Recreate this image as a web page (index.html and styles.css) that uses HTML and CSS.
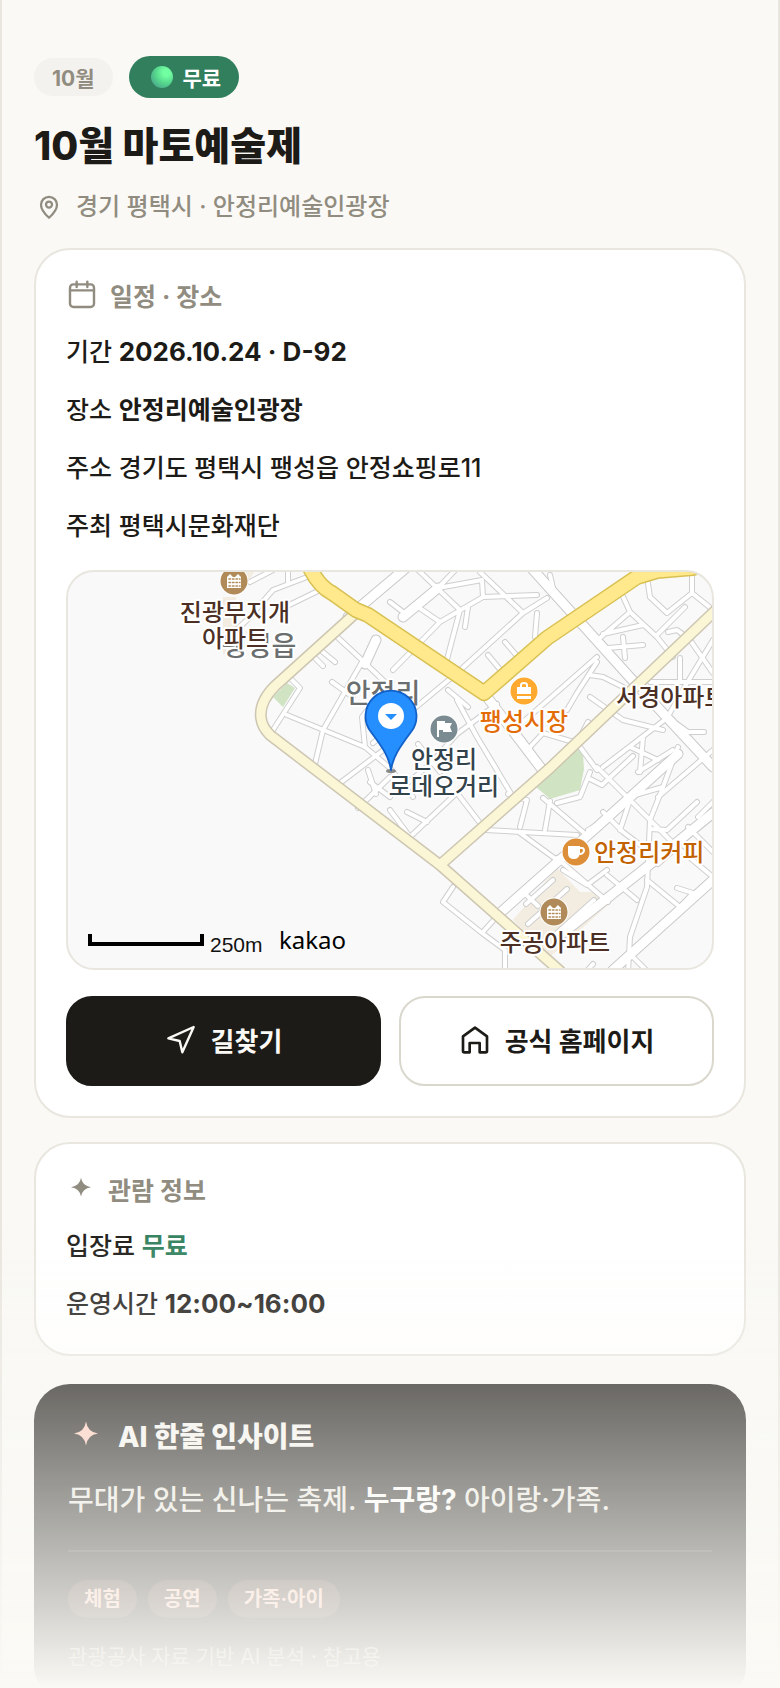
FILE: index.html
```html
<!DOCTYPE html>
<html lang="ko">
<head>
    <meta charset="UTF-8">
    <meta name="viewport" content="width=device-width, initial-scale=1.0">
    <title>10월 마토예술제</title>
    <link rel="stylesheet" href="styles.css">
</head>
<body>
    <main class="page">
        <header class="hero">
            <div class="badges">
                <span class="badge month">10월</span>
                <span class="badge free"><i class="orb"></i>무료</span>
            </div>
            <h1>10월 마토예술제</h1>
            <p class="location">
                <svg class="icon-sm" viewBox="0 0 24 24" aria-hidden="true">
                    <path d="M12 20.6C9.3 18.2 5.6 14.2 5.6 10.2a6.4 6.4 0 0 1 12.8 0c0 4-3.7 8-6.4 10.4z"/>
                    <circle cx="12" cy="10" r="2.4"/>
                </svg>
                경기 평택시 · 안정리예술인광장
            </p>
        </header>

        <section class="card">
            <h2>
                <svg class="icon" viewBox="0 0 24 24" aria-hidden="true">
                    <rect x="3" y="4" width="18" height="17" rx="2.5"/>
                    <path d="M3 8.5h18M8 2v4M16 2v4"/>
                </svg>
                일정 · 장소
            </h2>
            <div class="rows">
                <p>기간 <b class="num">2026.10.24 · D-92</b></p>
                <p>장소 <b>안정리예술인광장</b></p>
                <p>주소 경기도 평택시 팽성읍 안정쇼핑로11</p>
                <p>주최 평택시문화재단</p>
            </div>

            <div class="map">
                <svg viewBox="0 0 644 396" preserveAspectRatio="xMidYMid slice" role="img" aria-label="안정리예술인광장 지도">
                    <defs>
                        <!-- 골목길 -->
                        <g id="lanes">
                            <path d="M267 63L294 88L322 115M294 90L255 158L247 192M219 143L297 175L294 145L305 131M205 158L232 116L222 106M244 83L255 94M250 76L267 90M264 110L285 125"/>
                            <path d="M182 10L205 -2M160 66L179 48L205 18L239 5M220 -2V10M215 36L252 18M297 175L322 196L345 225M322 173L272 211M302 210L322 225M300 198L308 222M322 238L342 265L395 215M322 205L290 236M339 240L359 250"/>
                            <path d="M347 -5L392 38L377 95M395 -10L370 16M370 16L414 8L415 25L469 23M415 25L372 50L325 98M412 0L455 41L389 101L305 171M455 41L479 26M400 35L397 55M469 41L467 65M420 83L435 101M437 70L450 85M482 3L485 16M350 35L372 50M322 30L335 40"/>
                            <path d="M552 18L562 40L589 65L605 85M535 62L575 53M562 40L533 65M579 5L582 25L599 41L624 21L645 38M624 -2V21M600 60L609 58L622 68L645 101M540 76L575 73M555 65L557 86M590 62L617 35M582 110H645M612 86V110"/>
                            <path d="M645 68L619 111L599 146L535 195M522 103L535 105L555 115M529 85L480 128L455 150M522 125L555 148L595 158M499 138L509 121L529 90M462 175L475 161L509 171L529 198M575 165L572 200M562 175L590 188M609 152L620 160L636 160M389 128L409 165L429 198M435 150L455 168M429 132L389 162L362 192L335 215M409 165L445 225M380 118L400 135M350 172L372 200M509 171L520 150"/>
                            <path d="M610 175L595 215L582 248L579 315L562 365L560 400M529 195L582 248L609 275L645 305M475 226L515 260M417 258L509 263M452 261L489 288M389 221L412 251M440 222L459 228L452 255M482 229L477 258M489 231L512 225L522 200M522 207L534 213"/>
                            <path d="M385 315L375 330L414 361L437 378V400M414 361L432 341M562 228L552 258M595 215L560 225M582 257L599 258L629 230M535 240L555 260L575 275L582 290M495 298L519 313L539 298M539 303L569 328M579 308L612 335L625 321L609 316M489 286L540 330M520 258L545 243M455 320L470 334M609 275L590 292M620 255L645 280M590 225L645 178M630 245L645 230M565 385L580 400M518 400L525 392M570 200L605 178M535 212L565 184"/>
                            <path d="M485 308L458 332M499 317L460 352M526 328L489 361"/>
                        </g>
                        <g id="streets">
                            <path d="M345 -10L280 45M458 -10L567 111L645 195M416 121L476 200M297 92L308 68M335 45L370 16"/>
                            <path d="M432 341L495 285L529 255L610 182M495 361L575 298L645 241M545 398L645 308"/>
                        </g>
                        <path id="pale" d="M290 39L207 114Q191 130 193 146Q194 155 202 163L372 293L492 399M372 293L482 196L650 36"/>
                        <path id="highway" d="M240 -8Q250 14 264 21L288 38L300 43L416 121L479 66L569 5L589 -1L625 -4"/>
                        <g id="apartment">
                            <circle r="14.500" fill="#fff"/>
                            <circle r="13.500" fill="#b08b59"/>
                            <path d="M-7 7V-4L-4 -7L-1 -4L1 -4L4 -7L7 -4V7z" fill="#fff"/>
                            <path d="M-5 -2H6M-5 1.500H6M-5 5H6" stroke="#b08b59" stroke-width="1.500" stroke-dasharray="1.500 2"/>
                        </g>
                    </defs>

                    <path class="block" d="M445 348L489 296L512 320H525L540 333L482 385zM157 20H172L190 -5H172zM155 25H168V55L180 60L165 82H155z"/>
                    <path class="park" d="M467 214L482 227L512 218L516 197L515 182L508 176L485 198zM205 125L219 111L227 116L215 135z"/>
                    <use href="#lanes" class="road lane-edge"/>
                    <use href="#streets" class="road street-edge"/>
                    <use href="#lanes" class="road lane"/>
                    <use href="#streets" class="road street"/>
                    <use href="#pale" class="road pale-edge"/>
                    <use href="#pale" class="road pale"/>
                    <use href="#highway" class="road highway-edge"/>
                    <use href="#highway" class="road highway"/>

                    <g class="labels">
                        <text class="area" x="191" y="84" font-size="27">팽성읍</text>
                        <text class="area" x="315" y="131" font-size="27">안정리</text>
                        <text class="brown" x="167" y="49">진광무지개</text>
                        <text class="brown" x="167" y="75">아파트</text>
                        <text class="orange" x="456" y="158">팽성시장</text>
                        <text class="slate" x="376" y="196">안정리</text>
                        <text class="slate" x="376" y="223">로데오거리</text>
                        <text class="brown start" x="548" y="134">서경아파트</text>
                        <text class="rust start" x="526" y="289">안정리커피</text>
                        <text class="brown" x="487" y="379">주공아파트</text>
                    </g>

                    <use href="#apartment" x="166" y="9"/>
                    <use href="#apartment" x="486" y="340"/>
                    <g transform="translate(456 119)">
                        <circle r="14.500" fill="#fff"/>
                        <circle r="13.500" fill="#ffa92f"/>
                        <path d="M-7 -4H7V3H-7zM-7 5H7V8H-7z" fill="#fff"/>
                        <path d="M-3 -3V-6Q-3 -8 0 -8Q3 -8 3 -6V-3" fill="none" stroke="#fff" stroke-width="2"/>
                    </g>
                    <g transform="translate(376 157)">
                        <circle r="14.500" fill="#fff"/>
                        <circle r="13.500" fill="#7b8b92"/>
                        <path d="M-7 -8H1V-6H8L6 -2L8 3H-1V1H-5V8H-7z" fill="#fff"/>
                    </g>
                    <g transform="translate(508 280)">
                        <circle r="14.500" fill="#fff"/>
                        <circle r="13.500" fill="#dc8f38"/>
                        <path d="M-8 -6H4V1Q3 7 -2 7Q-8 7 -8 1z" fill="#fff"/>
                        <path d="M4 -4H6Q8 -4 8 -1Q7 2 4 2" fill="none" stroke="#fff" stroke-width="2"/>
                    </g>

                    <!-- 위치 핀 -->
                    <ellipse cx="323" cy="199" rx="5" ry="2" fill="#888"/>
                    <path d="M323 198C321 185 315 176 303 160A25.500 25.500 0 1 1 343 160C331 176 325 185 323 198z" fill="#258fff" stroke="#1261c9"/>
                    <circle cx="323" cy="144" r="13" fill="#fff"/>
                    <path d="M317 142H329L323 148z" fill="#258fff"/>

                    <path d="M22 362V372H134V362" fill="none" stroke="#000" stroke-width="4" stroke-linecap="butt" stroke-linejoin="miter"/>
                    <text class="scale" x="142" y="380">250m</text>
                    <text class="brand" x="211" y="377">kakao</text>
                </svg>
            </div>

            <div class="actions">
                <button type="button" class="btn primary">
                    <svg class="icon" viewBox="0 0 24 24" aria-hidden="true">
                        <path d="M21.500 3L2.500 11.500L11 13.500L13 22z"/>
                    </svg>
                    길찾기
                </button>
                <a href="#" class="btn">
                    <svg class="icon home" viewBox="0 0 24 24" aria-hidden="true">
                        <path d="M12 3.500L3 10V21Q3 22 4 22H8V15H15.500V22H20Q21 22 21 21V10z"/>
                    </svg>
                    공식 홈페이지
                </a>
            </div>
        </section>

        <section class="card">
            <h2>
                <svg class="icon-sm star" viewBox="0 0 24 24" aria-hidden="true">
                    <path d="M12 3Q13 9.600 20 10.500Q13 11.500 12 18Q11 11.500 4 10.500Q11 9.600 12 3z"/>
                </svg>
                관람 정보
            </h2>
            <div class="rows">
                <p>입장료 <b class="green">무료</b></p>
                <p>운영시간 <b class="num">12:00~16:00</b></p>
            </div>
        </section>

        <section class="insight">
            <h2>
                <svg class="star" viewBox="0 0 24 24" aria-hidden="true">
                    <path d="M12 3Q13 10 20 11Q13 12 12 19Q11 12 4 11Q11 10 12 3z"/>
                </svg>
                AI 한줄 인사이트
            </h2>
            <p class="summary">무대가 있는 신나는 축제. <b>누구랑?</b> 아이랑·가족.</p>
            <div class="tags">
                <span>체험</span>
                <span>공연</span>
                <span>가족·아이</span>
            </div>
            <p class="source">관광공사 자료 기반 AI 분석 · 참고용</p>
        </section>
    </main>
    <div class="fade"></div>
</body>
</html>
```
FILE: styles.css
```css
:root {
    --bg: #faf9f5;
    --ink: #1d1b17;
    --muted: #918c80;
    --line: #e9e6df;
    --green: #317f5d;
}

* {
    box-sizing: border-box;
}

body {
    margin: 0;
    height: 100vh;
    overflow: hidden;
    background: var(--bg);
    color: var(--ink);
    font-family: Inter, "Noto Sans CJK KR", sans-serif;
}

h1, h2, p {
    margin: 0;
}

svg {
    flex-shrink: 0;
    fill: none;
    stroke: currentColor;
    stroke-width: 1.8;
    stroke-linejoin: round;
    stroke-linecap: round;
}

.page {
    min-height: 100vh;
    padding: 56px 32px 0;
    border-left: 2px solid var(--line);
    border-right: 2px solid var(--line);
}

.badges {
    display: flex;
    align-items: center;
    gap: 16px;
}

.badge {
    display: flex;
    align-items: center;
    border-radius: 999px;
    font-weight: 700;
}

.month {
    height: 38px;
    padding: 0 18px;
    background: #f3f2ee;
    color: var(--muted);
    font-size: 21px;
}

.free {
    height: 42px;
    gap: 10px;
    padding: 0 18px 0 22px;
    background: var(--green);
    color: #fff;
    font-size: 21px;
}

.orb {
    width: 22px;
    height: 22px;
    border-radius: 50%;
    background: radial-gradient(circle at 70% 30%, #72ffa2 15%, #55d68c 50%, #499c8c 90%);
}

h1 {
    margin-top: 19px;
    font-size: 39px;
    line-height: 58px;
    font-weight: 800;
}

.location {
    display: flex;
    align-items: center;
    gap: 12px;
    margin-top: 15px;
    color: var(--muted);
    font-size: 24px;
    line-height: 34px;
    font-weight: 500;
}

.icon {
    width: 32px;
    height: 32px;
}

.icon-sm {
    width: 30px;
    height: 30px;
}

.card {
    margin-top: 24px;
    padding: 30px;
    border: 2px solid var(--line);
    border-radius: 36px;
    background: #fff;
}

.card h2 {
    display: flex;
    align-items: center;
    gap: 12px;
    height: 30px;
    margin-bottom: 21px;
    color: var(--muted);
    font-size: 25px;
    font-weight: 700;
}

.rows {
    display: flex;
    flex-direction: column;
    gap: 16px;
    margin-bottom: -1px;
    font-size: 25px;
    line-height: 42px;
    font-weight: 500;
}

.rows b {
    font-weight: 700;
}

.rows .num {
    font-size: 26px;
}

.rows .green {
    color: var(--green);
}

.star {
    fill: currentColor;
    stroke: none;
}

.map {
    height: 400px;
    margin-top: 24px;
    border: 2px solid var(--line);
    border-radius: 28px;
    overflow: hidden;
    background: #f9f9f9;
}

.map svg {
    display: block;
    width: 100%;
    height: 100%;
    stroke: none;
}

.block { fill: #f3ece0; }
.park { fill: #d0e3c3; }
.road { fill: none; }
.lane-edge { stroke: #cfcfcf; stroke-width: 6; }
.lane { stroke: #fff; stroke-width: 4; }
.street-edge { stroke: #c9c9c9; stroke-width: 11; }
.street { stroke: #fff; stroke-width: 9; }
.pale-edge { stroke: #cdc6b2; stroke-width: 12; }
.pale { stroke: #fbf6d5; stroke-width: 9; }
.highway-edge { stroke: #d8c052; stroke-width: 16; }
.highway { stroke: #ffe98c; stroke-width: 13; }

.labels text {
    text-anchor: middle;
    font-family: "Noto Sans CJK KR", sans-serif;
    font-weight: 500;
    stroke: #fff;
    stroke-width: 4;
    paint-order: stroke;
}

.labels .brown,
.labels .orange,
.labels .slate,
.labels .rust {
    font-size: 24px;
}

.labels .start { text-anchor: start; }
.area { fill: #6c6f70; }
.brown { fill: #4c3025; }
.orange { fill: #e36c09; }
.slate { fill: #33434b; }
.rust { fill: #c26200; }

.scale {
    fill: #111;
    font-family: "Liberation Sans", sans-serif;
    font-size: 21px;
}

.brand {
    fill: #000;
    font-family: "Noto Sans", sans-serif;
    font-size: 24px;
}

.actions {
    display: grid;
    grid-template-columns: 1fr 1fr;
    gap: 18px;
    margin-top: 26px;
}

.btn {
    display: flex;
    align-items: center;
    justify-content: center;
    gap: 14px;
    height: 90px;
    padding: 0 0 4px;
    border: 2px solid #dad7cd;
    border-radius: 26px;
    background: #fff;
    color: var(--ink);
    font-family: inherit;
    font-size: 26px;
    font-weight: 700;
    text-decoration: none;
    cursor: pointer;
}

.primary {
    border-color: var(--ink);
    background: var(--ink);
    color: var(--bg);
}

.home {
    stroke-width: 2;
}

.insight {
    margin-top: 28px;
    padding: 34px 34px 30px;
    border-radius: 36px;
    background: var(--ink);
    color: #e8e6df;
}

.insight h2 {
    display: flex;
    align-items: center;
    gap: 14px;
    height: 34px;
    color: #f5f3ee;
    font-size: 28px;
    font-weight: 800;
}

.insight .star {
    width: 36px;
    height: 36px;
    color: #ffc9b8;
}

.summary {
    margin-top: 26px;
    padding-bottom: 28px;
    border-bottom: 2px solid rgba(255, 255, 255, 0.12);
    font-size: 28px;
    line-height: 44px;
    font-weight: 500;
}

.summary b {
    color: #fff;
}

.tags {
    display: flex;
    gap: 11px;
    margin-top: 28px;
}

.tags span {
    height: 38px;
    padding: 0 16px;
    border-radius: 19px;
    background: rgba(255, 160, 140, 0.18);
    color: #ffc9b8;
    font-size: 20px;
    line-height: 38px;
    font-weight: 700;
}

.source {
    margin-top: 24px;
    color: #a5a196;
    font-size: 21px;
    line-height: 30px;
    font-weight: 400;
}

.fade {
    position: fixed;
    left: 0;
    right: 0;
    bottom: 0;
    height: 468px;
    background: linear-gradient(rgba(250, 249, 245, 0), #faf9f5);
    pointer-events: none;
}
```
